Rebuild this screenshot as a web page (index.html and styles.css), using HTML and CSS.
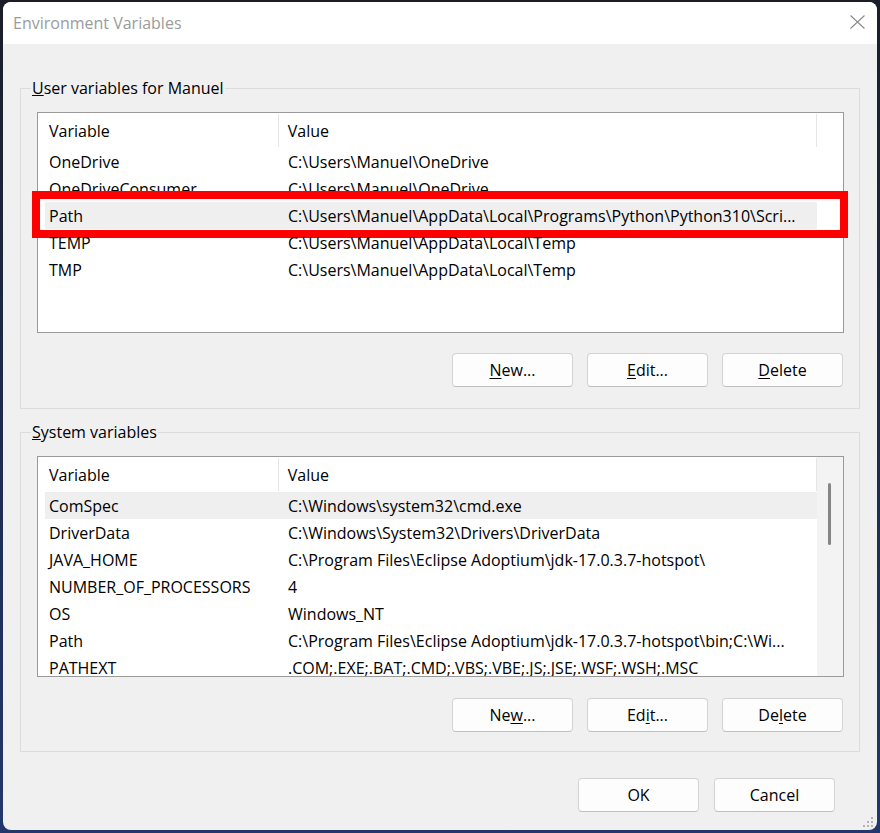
FILE: index.html
```html
<!DOCTYPE html>
<html lang="en">
<head>
    <meta charset="UTF-8">
    <title>Environment Variables</title>
    <link rel="stylesheet" href="styles.css">
</head>
<body>
    <div class="window">
        <div class="titlebar">
            <span class="title">Environment Variables</span>
            <svg class="close-icon" width="15" height="14" viewBox="0 0 15 14"><path d="M0.5 0.5 L14.5 13.5 M14.5 0.5 L0.5 13.5" stroke="#8a8a8a" stroke-width="1.1" fill="none"/></svg>
        </div>

        <div class="content">
            <fieldset class="group">
                <legend><u>U</u>ser variables for Manuel</legend>
                <div class="list">
                    <div class="list-main">
                        <div class="list-head"><div class="head-var">Variable</div><div class="head-val">Value</div></div>
                        <div class="row"><span class="cell-var">OneDrive</span><span class="cell-val">C:\Users\Manuel\OneDrive</span></div>
                        <div class="row"><span class="cell-var">OneDriveConsumer</span><span class="cell-val">C:\Users\Manuel\OneDrive</span></div>
                        <div class="row selected marked"><span class="cell-var">Path</span><span class="cell-val">C:\Users\Manuel\AppData\Local\Programs\Python\Python310\Scri...</span></div>
                        <div class="row"><span class="cell-var">TEMP</span><span class="cell-val">C:\Users\Manuel\AppData\Local\Temp</span></div>
                        <div class="row"><span class="cell-var">TMP</span><span class="cell-val">C:\Users\Manuel\AppData\Local\Temp</span></div>
                    </div>
                    <div class="list-side"></div>
                </div>
                <div class="group-buttons">
                    <button class="btn"><u>N</u>ew...</button>
                    <button class="btn"><u>E</u>dit...</button>
                    <button class="btn"><u>D</u>elete</button>
                </div>
            </fieldset>

            <fieldset class="group group-system">
                <legend><u>S</u>ystem variables</legend>
                <div class="list list-clip">
                    <div class="list-main">
                        <div class="list-head"><div class="head-var">Variable</div><div class="head-val">Value</div></div>
                        <div class="row selected"><span class="cell-var">ComSpec</span><span class="cell-val">C:\Windows\system32\cmd.exe</span></div>
                        <div class="row"><span class="cell-var">DriverData</span><span class="cell-val">C:\Windows\System32\Drivers\DriverData</span></div>
                        <div class="row"><span class="cell-var">JAVA_HOME</span><span class="cell-val">C:\Program Files\Eclipse Adoptium\jdk-17.0.3.7-hotspot\</span></div>
                        <div class="row"><span class="cell-var">NUMBER_OF_PROCESSORS</span><span class="cell-val">4</span></div>
                        <div class="row"><span class="cell-var">OS</span><span class="cell-val">Windows_NT</span></div>
                        <div class="row"><span class="cell-var">Path</span><span class="cell-val">C:\Program Files\Eclipse Adoptium\jdk-17.0.3.7-hotspot\bin;C:\Wi...</span></div>
                        <div class="row"><span class="cell-var">PATHEXT</span><span class="cell-val">.COM;.EXE;.BAT;.CMD;.VBS;.VBE;.JS;.JSE;.WSF;.WSH;.MSC</span></div>
                    </div>
                    <div class="list-side scrollbar"><div class="scroll-thumb"></div></div>
                </div>
                <div class="group-buttons">
                    <button class="btn">Ne<u>w</u>...</button>
                    <button class="btn">Ed<u>i</u>t...</button>
                    <button class="btn">De<u>l</u>ete</button>
                </div>
            </fieldset>

            <div class="dialog-buttons">
                <button class="btn">OK</button>
                <button class="btn">Cancel</button>
            </div>
        </div>

        <svg class="grip" width="11" height="11" viewBox="0 0 11 11">
            <rect x="8" y="0" width="2" height="2" fill="#b4b4b4"/>
            <rect x="4" y="4" width="2" height="2" fill="#b4b4b4"/>
            <rect x="8" y="4" width="2" height="2" fill="#b4b4b4"/>
            <rect x="0" y="8" width="2" height="2" fill="#b4b4b4"/>
            <rect x="4" y="8" width="2" height="2" fill="#b4b4b4"/>
            <rect x="8" y="8" width="2" height="2" fill="#b4b4b4"/>
        </svg>
    </div>
</body>
</html>
```

FILE: styles.css
```css
html, body { margin: 0; height: 100%; }
body { background: linear-gradient(#1b1e28, #22376c); font-family: "Open Sans", sans-serif; font-size: 16px; color: #000; overflow: hidden; }

.window { position: relative; margin: 2px 3px 0 3px; height: 828px; background: #f0f0f0; border-radius: 8px; overflow: hidden; }
.titlebar { height: 42px; background: #fff; display: flex; align-items: center; justify-content: space-between; padding: 0 12px 0 10px; }
.title { color: #9b9b9b; font-size: 16px; }
.close-icon { display: block; margin-top: -2px; }

.content { padding: 33px 17px 0 17px; }

.group { margin: 0; border: 1px solid #dcdcdc; padding: 13px 15px 21px 16px; }
.group legend { margin-left: -6px; padding: 0 1px; line-height: 22px; }
.group-system { margin-top: 12px; padding-bottom: 19px; }
.group-system .group-buttons { margin-top: 21px; }

.list { height: 221px; box-sizing: border-box; border: 1px solid #9a9a9a; background: #fff; display: flex; }
.list-clip { overflow: hidden; }
.list-main { width: 779px; }
.list-side { flex: 1; }
.scrollbar { background: #f3f3f3; padding-left: 11px; padding-top: 26px; }
.scroll-thumb { width: 3px; height: 62px; background: #858585; border-radius: 2px; }

.list-head { height: 35px; display: flex; align-items: center; }
.head-var, .head-val { height: 33px; line-height: 34px; border-right: 1px solid #e5e5e5; box-sizing: border-box; }
.head-var { width: 241px; padding-left: 11px; }
.head-val { width: 539px; padding-left: 9px; }

.row { position: relative; height: 27px; line-height: 27px; margin-left: 7px; display: flex; white-space: nowrap; }
.row.selected { background: #efefef; }
.cell-var, .cell-val { padding-top: 1px; box-sizing: border-box; overflow: hidden; }
.cell-var { width: 233px; padding-left: 4px; }
.cell-val { width: 539px; padding-left: 10px; }
.row.marked::after { content: ""; position: absolute; top: -11px; bottom: -9px; left: -13px; right: -31px; border: 8px solid #ff0000; }

.group-buttons { margin-top: 20px; display: flex; justify-content: flex-end; gap: 14px; padding-right: 1px; }
.btn { width: 121px; height: 34px; background: #fdfdfd; border: 1px solid #d3d3d3; border-bottom-color: #c0c0c0; border-radius: 4px; font-family: inherit; font-size: 16px; color: #000; padding: 0; }
.btn u { text-decoration-thickness: 1px; text-underline-offset: 2px; }

.dialog-buttons { margin-top: 26px; display: flex; justify-content: flex-end; gap: 15px; padding-right: 25px; }

.grip { position: absolute; right: 3px; bottom: 2px; }
```
